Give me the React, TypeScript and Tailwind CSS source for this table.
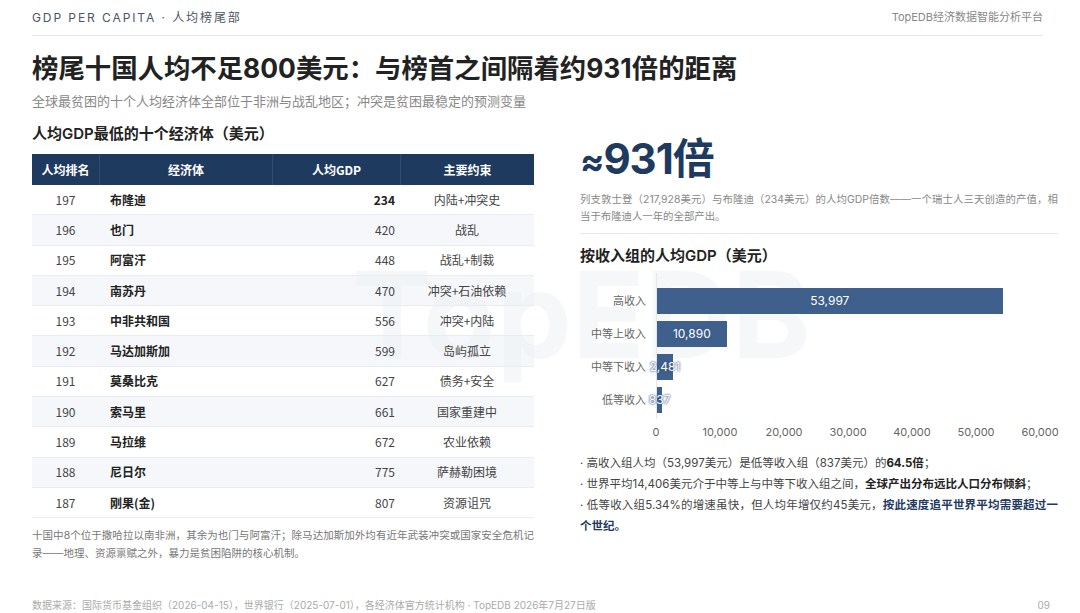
const rows = [
  { rank: 197, name: "布隆迪", gdp: "234", note: "内陆+冲突史" },
  { rank: 196, name: "也门", gdp: "420", note: "战乱" },
  { rank: 195, name: "阿富汗", gdp: "448", note: "战乱+制裁" },
  { rank: 194, name: "南苏丹", gdp: "470", note: "冲突+石油依赖" },
  { rank: 193, name: "中非共和国", gdp: "556", note: "冲突+内陆" },
  { rank: 192, name: "马达加斯加", gdp: "599", note: "岛屿孤立" },
  { rank: 191, name: "莫桑比克", gdp: "627", note: "债务+安全" },
  { rank: 190, name: "索马里", gdp: "661", note: "国家重建中" },
  { rank: 189, name: "马拉维", gdp: "672", note: "农业依赖" },
  { rank: 188, name: "尼日尔", gdp: "775", note: "萨赫勒困境" },
  { rank: 187, name: "刚果(金)", gdp: "807", note: "资源诅咒" },
];

const groups = [
  { label: "高收入", value: 53997 },
  { label: "中等上收入", value: 10890 },
  { label: "中等下收入", value: 2481 },
  { label: "低等收入", value: 837 },
];

const ticks = ["0", "10,000", "20,000", "30,000", "40,000", "50,000", "60,000"];

function IncomeChart() {
  return (
    <div className="mt-[7px] text-[11px] text-[#666]">
      <div className="flex">
        <div className="w-[66px] flex flex-col gap-[7px] pt-[15px]">
          {groups.map((g) => (
            <div key={g.label} className="h-[26px] flex items-center justify-end whitespace-nowrap">
              {g.label}
            </div>
          ))}
        </div>
        <div className="ml-[10px] w-[384px] border-l border-[#e5e7eb] flex flex-col gap-[7px] pt-[15px] pb-[6px]">
          {groups.map((g) => (
            <div key={g.label} className="h-[26px] flex items-center">
              <div
                className="relative h-full bg-[#3f5f8c]"
                style={{ width: `${(g.value / 60000) * 384}px` }}
              >
                <span className="absolute left-1/2 top-1/2 -translate-x-1/2 -translate-y-1/2 whitespace-nowrap text-[12px] text-white [text-shadow:0_0_2px_#3f5f8c,0_0_2px_#3f5f8c]">
                  {g.value.toLocaleString("en-US")}
                </span>
              </div>
            </div>
          ))}
        </div>
      </div>
      <div className="ml-[76px] mt-[5px] w-[384px] flex justify-between text-[11px] text-[#666]">
        {ticks.map((t) => (
          <span key={t} className="w-0 flex justify-center">
            <span className="whitespace-nowrap">{t}</span>
          </span>
        ))}
      </div>
    </div>
  );
}

export default function App() {
  return (
    <div className="relative w-[1080px] h-[613px] bg-white overflow-hidden flex flex-col font-[Inter,'Noto_Sans_CJK_SC',sans-serif] text-[#222]">
      {/* watermark, sits behind the content */}
      <div className="pointer-events-none absolute left-[352px] top-[255px] text-[120px] leading-none font-bold text-[#1f3a5f]/[0.045]">
        TopEDB
      </div>

      <div className="relative ml-8 mr-[37px] h-[36px] flex items-center justify-between border-b border-[#e5e7eb]">
        <span className="text-[12px] tracking-[0.16em] text-[#4b5563]">GDP PER CAPITA · 人均榜尾部</span>
        <span className="text-[11px] text-[#888]">TopEDB经济数据智能分析平台</span>
      </div>

      <h1 className="relative ml-8 mt-[14px] text-[26.4px] leading-[36px] font-bold text-[#222]">
        榜尾十国人均不足800美元：与榜首之间隔着约931倍的距离
      </h1>
      <p className="relative ml-8 mt-[6px] text-[13px] leading-[18px] text-[#888]">
        全球最贫困的十个人均经济体全部位于非洲与战乱地区；冲突是贫困最稳定的预测变量
      </p>

      <div className="relative ml-8 mr-[22px] flex gap-[46px]">
        <div className="w-[502px]">
          <h2 className="mt-[14px] text-[15px] leading-[20px] font-semibold">人均GDP最低的十个经济体（美元）</h2>
          <div className="mt-[10px] font-['Noto_Sans_CJK_SC',sans-serif] text-[12px]">
            <div className="grid grid-cols-[67px_173px_128px_134px] h-[31px] bg-[#1f3a5f] text-white font-bold text-[12px]">
              <div className="flex items-center justify-center">人均排名</div>
              <div className="flex items-center justify-center border-l border-white/10">经济体</div>
              <div className="flex items-center justify-center border-l border-white/10">人均GDP</div>
              <div className="flex items-center justify-center border-l border-white/10">主要约束</div>
            </div>
            {rows.map((r, i) => (
              <div
                key={r.rank}
                className={`grid grid-cols-[67px_173px_128px_134px] h-[30.3px] border-b border-[#e9edf2] text-[#444] ${
                  i % 2 === 1 ? "bg-[#eef2f6]/60" : ""
                }`}
              >
                <div className="flex items-center justify-center">{r.rank}</div>
                <div className="flex items-center pl-[11px] font-bold text-[#222]">{r.name}</div>
                <div className={`flex items-center justify-end pr-[5px] ${i === 0 ? "font-bold text-[#222]" : ""}`}>
                  {r.gdp}
                </div>
                <div className="flex items-center justify-center">{r.note}</div>
              </div>
            ))}
          </div>
          <p className="mt-[9px] text-[10.5px] leading-[18px] text-[#777] text-justify">
            十国中8个位于撒哈拉以南非洲，其余为也门与阿富汗；除马达加斯加外均有近年武装冲突或国家安全危机记录——地理、资源禀赋之外，暴力是贫困陷阱的核心机制。
          </p>
        </div>

        <div className="flex-1 pt-[23px]">
          <div className="text-[42px] leading-[52px] font-bold text-[#1f3a5f] tracking-tight">
            <span className="text-[36px]">≈</span>931倍
          </div>
          <p className="mt-[4px] text-[10.4px] leading-[17px] text-[#888] text-justify">
            列支敦士登（217,928美元）与布隆迪（234美元）的人均GDP倍数——一个瑞士人三天创造的产值，相当于布隆迪人一年的全部产出。
          </p>
          <div className="mt-[8px] border-t border-[#e5e7eb]" />
          <h2 className="mt-[12px] text-[15px] leading-[20px] font-semibold">按收入组的人均GDP（美元）</h2>
          <IncomeChart />
          <div className="mt-[12px] text-[11.5px] leading-[21px] text-[#444] text-justify">
            <p>
              · 高收入组人均（53,997美元）是低等收入组（837美元）的<b className="text-[#222]">64.5倍</b>；
            </p>
            <p>
              · 世界平均14,406美元介于中等上与中等下收入组之间，<b className="text-[#222]">全球产出分布远比人口分布倾斜</b>；
            </p>
            <p>
              · 低等收入组5.34%的增速虽快，但人均年增仅约45美元，
              <b className="text-[#1f3a5f]">按此速度追平世界平均需要超过一个世纪。</b>
            </p>
          </div>
        </div>
      </div>

      <div className="relative mt-auto ml-8 mr-[30px] mb-[1px] flex justify-between text-[10px] leading-[14px] text-[#aaa]">
        <span>数据来源：国际货币基金组织（2026-04-15），世界银行（2025-07-01），各经济体官方统计机构 · TopEDB 2026年7月27日版</span>
        <span>09</span>
      </div>
    </div>
  );
}
